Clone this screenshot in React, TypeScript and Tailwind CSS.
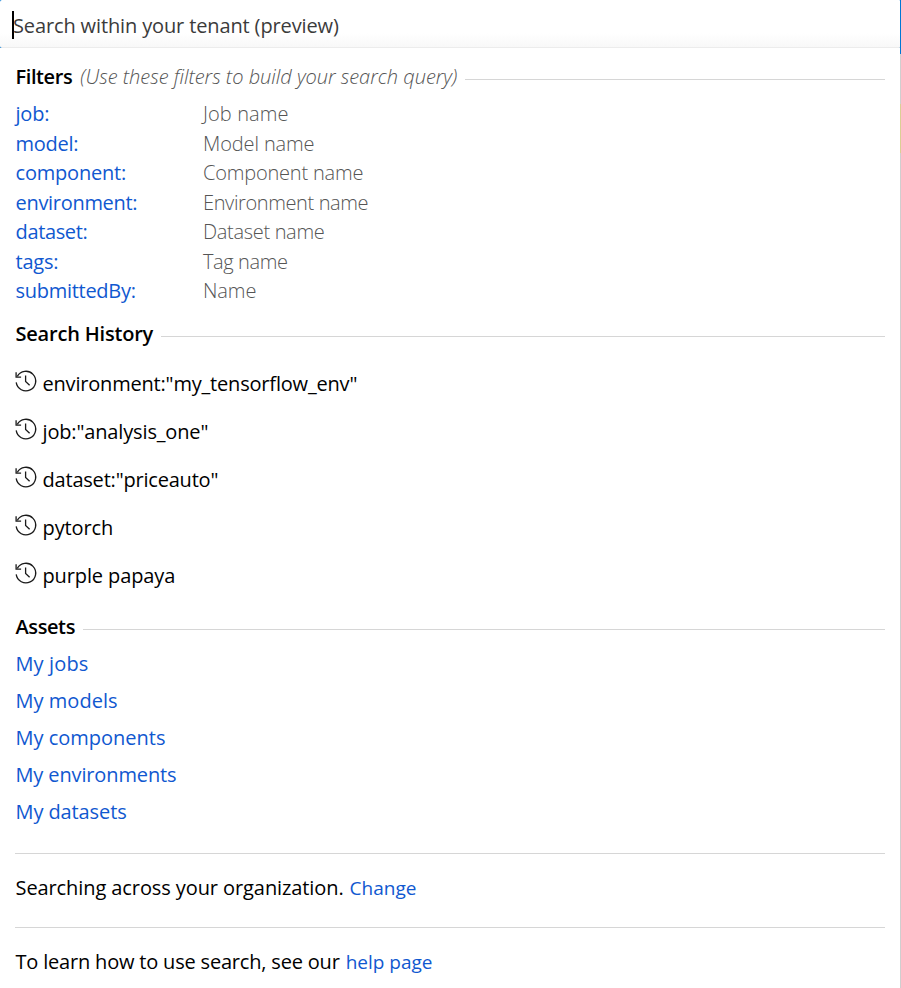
const filters = [
  { key: "job:", name: "Job name", kt: "tracking-[-0.2px]", nt: "tracking-[0.1px]" },
  { key: "model:", name: "Model name", kt: "tracking-[-0.25px]", nt: "tracking-[-0.12px]" },
  { key: "component:", name: "Component name", kt: "tracking-[-0.2px]", nt: "tracking-[-0.2px]" },
  { key: "environment:", name: "Environment name", kt: "tracking-[-0.3px]", nt: "tracking-[-0.38px]" },
  { key: "dataset:", name: "Dataset name", kt: "tracking-[-0.35px]", nt: "tracking-[-0.32px]" },
  { key: "tags:", name: "Tag name", kt: "tracking-[-0.2px]", nt: "tracking-[-0.4px]" },
  { key: "submittedBy:", name: "Name", kt: "tracking-[-0.28px]", nt: "tracking-[-0.1px]" },
];

const history = [
  { text: 'environment:"my_tensorflow_env"', t: "tracking-[-0.19px]" },
  { text: 'job:"analysis_one"', t: "tracking-[-0.15px]" },
  { text: 'dataset:"priceauto"', t: "tracking-[-0.2px]" },
  { text: "pytorch", t: "tracking-[-0.1px]" },
  { text: "purple papaya", t: "tracking-[-0.12px]" },
];

const assets = [
  { text: "My jobs", t: "tracking-[0.12px]" },
  { text: "My models", t: "tracking-[0.03px]" },
  { text: "My components", t: "tracking-normal" },
  { text: "My environments", t: "tracking-[-0.13px]" },
  { text: "My datasets", t: "tracking-[-0.1px]" },
];

function HistoryIcon() {
  return (
    <svg width="24" height="24" viewBox="0 0 24 24" fill="none" stroke="#1b1b1b" strokeWidth="1.3">
      <path d="M3.3 7.4A9.8 9.8 0 1 1 2.2 13.4" />
      <path d="M2.1 3.2V8.1H7.1" />
      <path d="M11.6 6.6V12.4L15.6 16.3" />
    </svg>
  );
}

function Rule() {
  return <div className="mt-[5px] h-px flex-1 bg-[#d6d6d6]" />;
}

export default function App() {
  return (
    <div className="flex h-[988px] w-[901px] flex-col overflow-hidden bg-white font-['Open_Sans','Noto_Sans',sans-serif] text-[20px] whitespace-nowrap text-black">
      <header className="shrink-0 bg-[#0078d4]">
        <div className="flex h-12 justify-between rounded-[2px] border-b border-[#ececec] bg-linear-to-b from-white from-70% to-[#f8f8f8]">
          <div className="flex h-[50px] items-center pl-3">
            <div className="-mr-px h-7 w-[2px] bg-black" />
            <span className="pt-px tracking-[-0.13px] text-[#3b3b3b]">Search within your tenant (preview)</span>
          </div>
          <div className="h-12 w-px bg-[#0078d4]" />
        </div>
      </header>
      <div className="flex min-h-0 flex-1">
        <main className="flex w-[900px] flex-col pr-[15px] pl-[15.5px]">
          <div className="mt-[14px] flex h-[30px] items-center">
            <h2 className="mr-2 font-semibold tracking-[-0.4px]">Filters</h2>
            <span className="mr-2 font-light tracking-[-0.02px] text-[#555] italic">(Use these filters to build your search query)</span>
            <Rule />
          </div>
          <dl className="mt-[7px] leading-[29.5px]">
            {filters.map((f) => (
              <div key={f.key} className="flex">
                <dt className={`w-[187.5px] text-[#1058d0] ${f.kt}`}>{f.key}</dt>
                <dd className={`font-light text-[#555] ${f.nt}`}>{f.name}</dd>
              </div>
            ))}
          </dl>
          <div className="mt-[13.5px] flex h-[30px] items-center">
            <h2 className="mr-2 font-semibold tracking-[-0.2px]">Search History</h2>
            <Rule />
          </div>
          <ul className="mt-[11px]">
            {history.map((h) => (
              <li key={h.text} className="flex h-12 items-center">
                <div className="-ml-0.5 h-[30px] w-[29px] pl-[0.5px]">
                  <HistoryIcon />
                </div>
                <span className={h.t}>{h.text}</span>
              </li>
            ))}
          </ul>
          <div className="mt-[12px] flex h-[30px] items-center">
            <h2 className="mr-2 font-semibold tracking-[-0.4px]">Assets</h2>
            <Rule />
          </div>
          <ul className="mt-[3px] leading-[37px] text-[#1058d0]">
            {assets.map((a) => (
              <li key={a.text} className={a.t}>{a.text}</li>
            ))}
          </ul>
          <div className="mt-[23px] -ml-[0.5px] flex h-[74px] shrink-0 items-baseline border-t border-[#d6d6d6] pt-[19px] pl-[0.5px]">
            <span className="mr-[6px] tracking-[-0.09px]">Searching across your organization.</span>
            <a className="text-[19px] text-[#1058d0]">Change</a>
          </div>
          <div className="-ml-[0.5px] flex h-[60px] shrink-0 items-baseline border-t border-[#d6d6d6] pt-[19px] pl-[0.5px]">
            <span className="mr-[6px] tracking-[-0.19px]">To learn how to use search, see our</span>
            <a className="text-[19px] text-[#1058d0]">help page</a>
          </div>
        </main>
        <div className="flex w-px flex-col bg-[#cfcfcf]">
          <div className="h-[6px] bg-[#0078d4]" />
          <div className="mt-[50px] h-[49px] bg-[#dccf94]" />
        </div>
      </div>
    </div>
  );
}
